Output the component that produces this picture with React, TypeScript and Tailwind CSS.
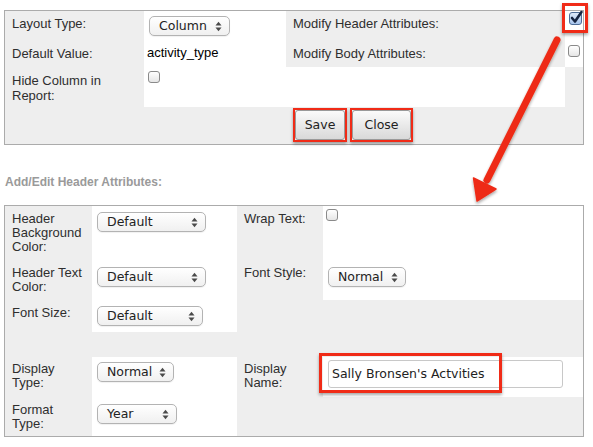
import React from "react";

function Arrows() {
  return (
    <svg width="7" height="11" viewBox="0 0 7 11" className="shrink-0">
      <path d="M0.5 4.5 L3.5 0.8 L6.5 4.5 Z" fill="#4a4a4a" />
      <path d="M0.5 6.5 L3.5 10.2 L6.5 6.5 Z" fill="#4a4a4a" />
    </svg>
  );
}

function Select({ value, cls }: { value: string; cls: string }) {
  return (
    <div
      className={`${cls} h-[20px] flex items-center justify-between rounded-[5px] border border-[#b3b3b3] bg-gradient-to-b from-white to-[#f0f0f0] pl-[9px] pr-[7px] font-['DejaVu_Sans',sans-serif] text-[12.5px] leading-none text-[#222] shadow-[0_1px_1px_rgba(0,0,0,0.06)]`}
    >
      <span>{value}</span>
      <Arrows />
    </div>
  );
}

function Check() {
  return (
    <div className="w-[12px] h-[12px] rounded-[3px] border border-[#8a8a8a] bg-gradient-to-b from-white to-[#e6e6e6]" />
  );
}

function Checked() {
  return (
    <div className="relative w-[13px] h-[13px] rounded-[3px] border border-[#4d6d98] bg-gradient-to-b from-[#dde9f8] to-[#a7c4ec]">
      <svg width="15" height="15" viewBox="0 0 15 15" className="absolute left-[-1px] top-[-3px]">
        <path d="M3 8 L6 11.5 L12.5 2" stroke="#152440" strokeWidth="2.6" fill="none" strokeLinecap="round" strokeLinejoin="round" />
      </svg>
    </div>
  );
}

function Btn({ label, cls }: { label: string; cls: string }) {
  return (
    <div className="border-[2px] border-[#f02b17] shadow-[0_2px_3px_rgba(0,0,0,0.35)]">
      <div
        className={`${cls} h-[30px] flex items-center justify-center rounded-[3px] border border-[#9a9a9a] bg-gradient-to-b from-[#fbfbfb] to-[#d9d9d9] font-['DejaVu_Sans',sans-serif] text-[12.5px] text-[#222]`}
      >
        {label}
      </div>
    </div>
  );
}

export default function App() {
  return (
    <div className="relative w-[593px] h-[447px] bg-white font-['Liberation_Sans',Arial,sans-serif] text-[13px] leading-[14px] text-[#2e2e2e]">
      <div className="pt-[10px] pl-[4px]">
        <div className="w-[580px] border border-[#ababab] bg-[#eeeeee] grid grid-cols-[139px_142px_279px_18px] grid-rows-[30px_26px_40px_37px]">
          <div className="pl-[7px] pt-[6px]">Layout Type:</div>
          <div className="bg-white pl-[5px] pt-[5px]">
            <Select value="Column" cls="w-[81px]" />
          </div>
          <div className="pl-[7px] pt-[6px]">Modify Header Attributes:</div>
          <div className="bg-white" />

          <div className="pl-[7px] pt-[6px]">Default Value:</div>
          <div className="bg-white pl-[3px] pt-[5px] text-black">activity_type</div>
          <div className="pl-[7px] pt-[6px]">Modify Body Attributes:</div>
          <div className="bg-white pl-[3px] pt-[4px]">
            <Check />
          </div>

          <div className="pl-[7px] pr-[6px] pt-[6px] leading-[15px]">Hide Column in Report:</div>
          <div className="bg-white pl-[4px] pt-[4px]">
            <Check />
          </div>
          <div className="bg-white" />
          <div />

          <div className="col-span-4 flex items-start pt-[1px] pl-[288px] gap-[3px]">
            <Btn label="Save" cls="w-[50px]" />
            <Btn label="Close" cls="w-[59px]" />
          </div>
        </div>
      </div>

      <div className="pt-[30px] pl-[5px] text-[12px] font-bold text-[#9a9a9a] leading-[14px]">
        Add/Edit Header Attributes:
      </div>

      <div className="pt-[16px] pl-[4px]">
        <div className="w-[580px] border border-[#ababab] bg-[#eeeeee] grid grid-cols-[87px_145px_86px_260px] grid-rows-[56px_38px_32px_25px_40px_39px]">
          <div className="pl-[7px] pr-[5px] pt-[6px]">Header Background Color:</div>
          <div className="bg-white pl-[5px] pt-[6px]">
            <Select value="Default" cls="w-[109px]" />
          </div>
          <div className="pl-[7px] pt-[6px]">Wrap Text:</div>
          <div className="bg-white pl-[3px] pt-[3px]">
            <Check />
          </div>

          <div className="pl-[7px] pr-[5px] pt-[4px]">Header Text Color:</div>
          <div className="bg-white pl-[5px] pt-[5px]">
            <Select value="Default" cls="w-[109px]" />
          </div>
          <div className="pl-[7px] pt-[4px]">Font Style:</div>
          <div className="bg-white pl-[5px] pt-[5px]">
            <Select value="Normal" cls="w-[78px]" />
          </div>

          <div className="pl-[7px] pt-[6px]">Font Size:</div>
          <div className="bg-white pl-[5px] pt-[6px]">
            <Select value="Default" cls="w-[106px]" />
          </div>
          <div />
          <div />

          <div className="col-span-4" />

          <div className="pl-[7px] pr-[5px] pt-[5px]">Display Type:</div>
          <div className="bg-white pl-[5px] pt-[5px]">
            <Select value="Normal" cls="w-[77px]" />
          </div>
          <div className="pl-[7px] pr-[5px] pt-[5px]">Display Name:</div>
          <div className="bg-white pl-[5px] pt-[3px]">
            <div className="w-[235px] h-[28px] flex items-center rounded-[3px] border border-[#c8c8c8] bg-white pl-[3px] font-['DejaVu_Sans',sans-serif] text-[12.5px] text-[#222]">
              Sally Bronsen's Actvities
            </div>
          </div>

          <div className="pl-[7px] pr-[5px] pt-[6px]">Format Type:</div>
          <div className="bg-white pl-[5px] pt-[7px]">
            <Select value="Year" cls="w-[80px]" />
          </div>
          <div />
          <div />
        </div>
      </div>

      {/* annotation boxes */}
      <div className="absolute left-[562px] top-[3px] w-[26px] h-[30px] border-[3px] border-[#f02b17] shadow-[0_2px_3px_rgba(0,0,0,0.35)]" />
      <div className="absolute left-[569px] top-[12px]">
        <Checked />
      </div>
      <div className="absolute left-[319px] top-[353px] w-[183px] h-[40px] border-[3px] border-[#f02b17] shadow-[0_2px_3px_rgba(0,0,0,0.35)]" />

      {/* arrow */}
      <svg className="absolute left-0 top-0 pointer-events-none" width="593" height="447" viewBox="0 0 593 447">
        <defs>
          <filter id="sh" x="-20%" y="-20%" width="140%" height="140%">
            <feDropShadow dx="0" dy="2" stdDeviation="1.5" floodColor="#000" floodOpacity="0.35" />
          </filter>
        </defs>
        <g filter="url(#sh)">
          <line x1="557" y1="40" x2="487" y2="180" stroke="#ee2a16" strokeWidth="7" strokeLinecap="round" />
          <path d="M477 201 L473.5 178 L496 189 Z" fill="#ee2a16" stroke="#ee2a16" strokeWidth="1.5" strokeLinejoin="round" />
        </g>
      </svg>
    </div>
  );
}
